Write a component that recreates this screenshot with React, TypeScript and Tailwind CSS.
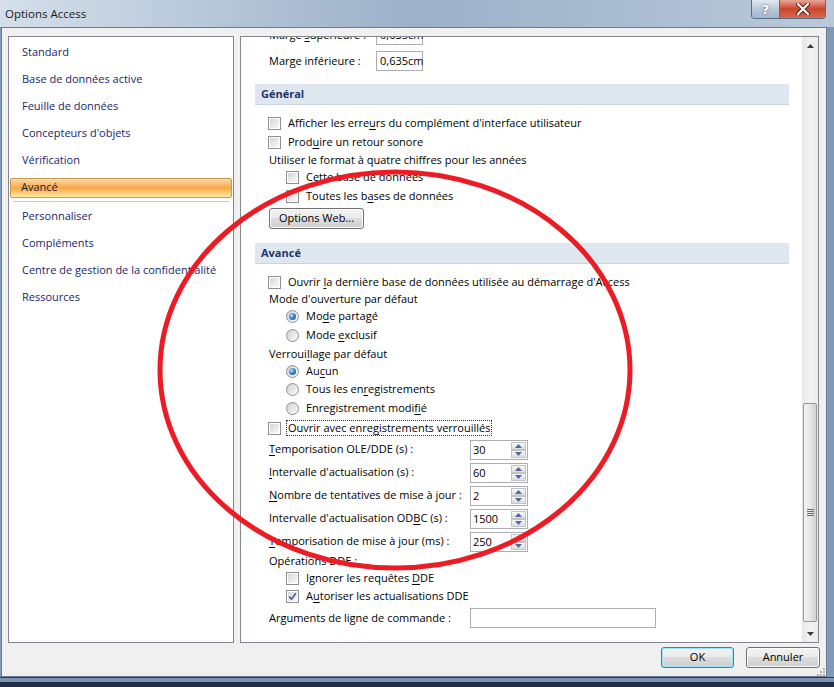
import React from "react";

const U = ({ children }: { children: React.ReactNode }) => (
  <span className="underline decoration-[1px] underline-offset-[2px]">{children}</span>
);

function Checkbox({ checked = false }: { checked?: boolean }) {
  return (
    <span className="relative flex h-[13px] w-[13px] shrink-0 items-center justify-center border border-[#8e8f8f] bg-white">
      <span className="absolute inset-[1px] bg-gradient-to-br from-[#d6d6d6] to-[#fafafa]" />
      {checked && (
        <svg className="relative" width="9" height="9" viewBox="0 0 9 9">
          <path d="M1.2 4.6 L3.6 7.2 L7.8 1.2" fill="none" stroke="#4c5f95" strokeWidth="1.7" />
        </svg>
      )}
    </span>
  );
}

function Radio({ checked = false }: { checked?: boolean }) {
  return (
    <span className="flex h-[13px] w-[13px] shrink-0 items-center justify-center rounded-full border border-[#8e8f8f] bg-gradient-to-br from-[#d2d2d2] to-[#fbfbfb]">
      {checked && (
        <span className="h-[7px] w-[7px] rounded-full bg-[radial-gradient(circle_at_35%_35%,#bfe3ff_0%,#3b86cc_45%,#15467e_100%)]" />
      )}
    </span>
  );
}

function SpinBtn({ up = false }: { up?: boolean }) {
  return (
    <div className="flex flex-1 items-center justify-center border border-[#c3c3c3] bg-gradient-to-b from-[#f7f7f7] to-[#dedede]">
      <svg width="7" height="4" viewBox="0 0 7 4">
        <path d={up ? "M0 4 L3.5 0 L7 4 Z" : "M0 0 L3.5 4 L7 0 Z"} fill="#50679a" />
      </svg>
    </div>
  );
}

function Spin({ value }: { value: string }) {
  return (
    <div className="flex h-[20px] w-[58px] border border-[#abadb3] bg-white">
      <span className="flex-1 pl-[2px] leading-[18px]">{value}</span>
      <div className="my-[1px] mr-[1px] flex w-[15px] flex-col">
        <SpinBtn up />
        <SpinBtn />
      </div>
    </div>
  );
}

function Header({ title }: { title: string }) {
  return (
    <div className="ml-[14px] flex h-[21px] w-[534px] items-center border-b border-[#c9d4df] bg-[#dee7f0] pl-[6px] font-bold text-[#1d3468]">
      {title}
    </div>
  );
}

const nav = [
  "Standard",
  "Base de données active",
  "Feuille de données",
  "Concepteurs d'objets",
  "Vérification",
];
const nav2 = ["Personnaliser", "Compléments", "Centre de gestion de la confidentialité", "Ressources"];

export default function App() {
  return (
    <div className="relative h-[687px] w-[834px] overflow-hidden bg-[#8199b9] font-['Open_Sans',sans-serif] text-[11px] text-black">
      {/* title bar */}
      <div className="flex h-[27px] items-start justify-between bg-gradient-to-r from-[#d4dfea] via-[#9cb0c8] to-[#b9c9da]">
        <span className="self-center pl-[5px] text-[11.5px] text-[#1a1a1a]">Options Access</span>
        <div className="mr-[8px] flex h-[19px] overflow-hidden rounded-b-[4px] border border-t-0 border-[#5a6c86]">
          <div className="flex w-[27px] items-center justify-center bg-gradient-to-b from-[#e2e9f1] via-[#b9c8d9] to-[#a4b6cb] font-['DejaVu_Sans',sans-serif] text-[13px] font-bold leading-none text-white [text-shadow:0_0_2px_#34445c]">
            ?
          </div>
          <div className="flex w-[46px] items-center justify-center border-l border-[#5a6c86] bg-gradient-to-b from-[#e8a698] via-[#c8432c] to-[#d66a4e]">
            <svg width="14" height="12" viewBox="0 0 14 12">
              <path d="M2 1 L12 11 M12 1 L2 11" stroke="#5a1a10" strokeWidth="4" strokeLinecap="round" />
              <path d="M2 1 L12 11 M12 1 L2 11" stroke="#ffffff" strokeWidth="2.2" strokeLinecap="round" />
            </svg>
          </div>
        </div>
      </div>

      {/* dialog body */}
      <div className="ml-[1px] flex h-[650px] w-[826px] flex-col border border-[#6b7a90] bg-[#f0f0f0]">
        <div className="flex pl-[6px] pt-[8px]">
          {/* nav */}
          <div className="h-[607px] w-[226px] border border-[#828790] bg-white pt-[2px] text-[#18266b]">
            {nav.map((n) => (
              <div key={n} className="flex h-[27px] items-center pl-[13px]">
                {n}
              </div>
            ))}
            <div className="flex h-[27px] items-center px-[1px]">
              <div className="flex h-[20px] w-full items-center rounded-[2px] border border-[#c39a4e] bg-gradient-to-b from-[#fdd9a6] via-[#f8a743] to-[#feeca0] pl-[10px] text-[#1a1a3a]">
                Avancé
              </div>
            </div>
            <div className="mx-[4px] h-[1px] bg-[#c3ccd8]" />
            <div className="mt-[1px]">
              {nav2.map((n) => (
                <div key={n} className="flex h-[27px] items-center pl-[13px]">
                  {n}
                </div>
              ))}
            </div>
          </div>

          {/* content panel */}
          <div className="ml-[6px] flex h-[607px] w-[579px] border border-[#828790] bg-white">
            <div className="flex-1 overflow-hidden">
              <div className="-mt-[12px]">
                <div className="flex h-[20px] items-center pl-[28px]">
                  <span className="w-[107px]">
                    Marge <U>s</U>upérieure :
                  </span>
                  <div className="h-[20px] w-[47px] border border-[#abadb3] pl-[3px] leading-[18px]">0,635cm</div>
                </div>
                <div className="mt-[6px] flex h-[20px] items-center pl-[28px]">
                  <span className="w-[107px]">
                    Mar<U>g</U>e inférieure :
                  </span>
                  <div className="h-[20px] w-[47px] border border-[#abadb3] pl-[3px] leading-[18px]">0,635cm</div>
                </div>

                <div className="mt-[13px]">
                  <Header title="Général" />
                </div>
                <div className="mt-[9px] flex h-[19px] items-center gap-[7px] pl-[27px]">
                  <Checkbox />
                  <span>
                    Afficher les erre<U>u</U>rs du complément d'interface utilisateur
                  </span>
                </div>
                <div className="flex h-[19px] items-center gap-[7px] pl-[27px]">
                  <Checkbox />
                  <span>
                    Prod<U>u</U>ire un retour sonore
                  </span>
                </div>
                <div className="flex h-[17px] items-center pl-[28px]">Utiliser le format à quatre chiffres pour les années</div>
                <div className="flex h-[17px] items-center gap-[7px] pl-[45px]">
                  <Checkbox />
                  <span>Cette base de données</span>
                </div>
                <div className="flex h-[20px] items-center gap-[7px] pl-[45px]">
                  <Checkbox />
                  <span>
                    Toutes les b<U>a</U>ses de données
                  </span>
                </div>
                <div className="mt-[2px] pl-[28px]">
                  <button className="h-[21px] w-[95px] rounded-[3px] border border-[#707070] bg-[linear-gradient(#f2f2f2_0%,#ebebeb_49%,#dddddd_50%,#cfcfcf_100%)] shadow-[inset_0_0_0_1px_#fcfcfc]">
                    Options Web...
                  </button>
                </div>

                <div className="mt-[14px]">
                  <Header title="Avancé" />
                </div>
                <div className="mt-[9px] flex h-[18px] items-center gap-[7px] pl-[27px]">
                  <Checkbox />
                  <span>
                    Ouvrir <U>l</U>a dernière base de données utilisée au démarrage d'Access
                  </span>
                </div>
                <div className="flex h-[17px] items-center pl-[28px]">Mode d'ouverture par défaut</div>
                <div className="flex h-[17px] items-center gap-[7px] pl-[45px]">
                  <Radio checked />
                  <span>
                    Mo<U>d</U>e partagé
                  </span>
                </div>
                <div className="flex h-[21px] items-center gap-[7px] pl-[45px]">
                  <Radio />
                  <span>
                    Mode <U>e</U>xclusif
                  </span>
                </div>
                <div className="flex h-[16px] items-center pl-[28px]">
                  <span>
                    Verroui<U>l</U>lage par défaut
                  </span>
                </div>
                <div className="flex h-[18px] items-center gap-[7px] pl-[45px]">
                  <Radio checked />
                  <span>
                    Au<U>c</U>un
                  </span>
                </div>
                <div className="flex h-[19px] items-center gap-[7px] pl-[45px]">
                  <Radio />
                  <span>
                    Tous les en<U>r</U>egistrements
                  </span>
                </div>
                <div className="flex h-[19px] items-center gap-[7px] pl-[45px]">
                  <Radio />
                  <span>
                    Enregistrement modi<U>f</U>ié
                  </span>
                </div>
                <div className="flex h-[20px] items-center gap-[5px] pl-[27px]">
                  <Checkbox />
                  <span className="border border-dotted border-[#333] px-[1px] leading-[14px]">
                    Ouvrir avec enre<U>g</U>istrements verrouillés
                  </span>
                </div>
                {[
                  [<><U>T</U>emporisation OLE/DDE (s) :</>, "30"],
                  [<><U>I</U>ntervalle d'actualisation (s) :</>, "60"],
                  [<><U>N</U>ombre de tentatives de mise à jour :</>, "2"],
                  [<>Intervalle d'actualisation OD<U>B</U>C (s) :</>, "1500"],
                  [<><U>T</U>emporisation de mise à jour (ms) :</>, "250"],
                ].map(([label, v], i) => (
                  <div key={i} className="flex h-[23px] items-center pl-[28px]">
                    <span className="w-[201px] whitespace-nowrap">{label}</span>
                    <Spin value={v as string} />
                  </div>
                ))}
                <div className="flex h-[16px] items-center pl-[28px]">Opérations DDE :</div>
                <div className="flex h-[18px] items-center gap-[7px] pl-[45px]">
                  <Checkbox />
                  <span>
                    Ignorer les requêtes <U>D</U>DE
                  </span>
                </div>
                <div className="flex h-[19px] items-center gap-[7px] pl-[45px]">
                  <Checkbox checked />
                  <span>
                    A<U>u</U>toriser les actualisations DDE
                  </span>
                </div>
                <div className="flex h-[24px] items-center pl-[28px]">
                  <span className="w-[201px]">Arguments de ligne de commande :</span>
                  <div className="h-[20px] w-[186px] border border-[#abadb3]" />
                </div>
              </div>
            </div>

            {/* scrollbar */}
            <div className="flex w-[16px] flex-col bg-gradient-to-r from-[#e6e6e6] via-[#f2f2f2] to-[#ececec]">
              <div className="flex h-[17px] items-center justify-center">
                <svg width="7" height="4" viewBox="0 0 7 4">
                  <path d="M0 4 L3.5 0 L7 4 Z" fill="#3c3c3c" />
                </svg>
              </div>
              <div className="flex-1 pt-[349px]">
                <div className="mx-[1px] flex h-[219px] items-center justify-center rounded-[2px] border border-[#979797] bg-gradient-to-r from-[#f4f4f4] via-[#e6e6e6] to-[#d2d2d2]">
                  <div className="flex w-[7px] flex-col gap-[1px]">
                    <div className="h-[1px] bg-[#6c6c6c]" />
                    <div className="h-[1px] bg-[#6c6c6c]" />
                    <div className="h-[1px] bg-[#6c6c6c]" />
                    <div className="h-[1px] bg-[#6c6c6c]" />
                  </div>
                </div>
              </div>
              <div className="flex h-[17px] items-center justify-center">
                <svg width="7" height="4" viewBox="0 0 7 4">
                  <path d="M0 0 L3.5 4 L7 0 Z" fill="#3c3c3c" />
                </svg>
              </div>
            </div>
          </div>
        </div>

        {/* buttons */}
        <div className="relative mr-[6px] mt-[4px] flex justify-end gap-[12px]">
          <button className="h-[21px] w-[73px] rounded-[3px] border border-[#3c7fb1] bg-[linear-gradient(#f2f2f2_0%,#ebebeb_49%,#dddddd_50%,#cfcfcf_100%)] shadow-[inset_0_0_0_1px_#9ee4f8]">
            OK
          </button>
          <button className="h-[21px] w-[74px] rounded-[3px] border border-[#707070] bg-[linear-gradient(#f2f2f2_0%,#ebebeb_49%,#dddddd_50%,#cfcfcf_100%)] shadow-[inset_0_0_0_1px_#fcfcfc]">
            Annuler
          </button>
        </div>
        <div className="mr-[1px] mt-auto flex justify-end pb-[1px]">
          <svg width="8" height="8" viewBox="0 0 8 8">
            {[
              [6, 0],
              [6, 3],
              [3, 3],
              [6, 6],
              [3, 6],
              [0, 6],
            ].map(([x, y], i) => (
              <rect key={i} x={x} y={y} width="2" height="2" fill="#b3b3b3" />
            ))}
          </svg>
        </div>
      </div>

      {/* bottom frame */}
      <div className="h-[10px] border-t border-[#2a3a52] bg-[linear-gradient(#7d94b5_0%,#7d94b5_40%,#1f2c44_45%,#1f2c44_100%)]" />

      {/* red annotation */}
      <svg className="pointer-events-none absolute inset-0" width="834" height="687" viewBox="0 0 834 687">
        <ellipse cx="395" cy="370" rx="235" ry="198" fill="none" stroke="#ed1c24" strokeWidth="5" />
      </svg>
    </div>
  );
}
